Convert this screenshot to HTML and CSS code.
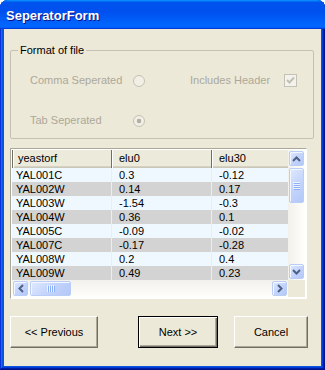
FILE: index.html
```html
<!doctype html>
<html lang="en">
<head>
    <meta charset="UTF-8">
    <title>SeperatorForm</title>
    <link rel="stylesheet" href="styles.css">
</head>
<body>
<div class="window">
    <div class="titlebar">SeperatorForm</div>
    <div class="client">
        <fieldset class="group">
            <legend>Format of file</legend>
            <div class="options">
                <span>Comma Seperated</span>
                <span class="radio"></span>
                <span>Includes Header</span>
                <span class="check">
                    <svg width="11" height="11" viewBox="0 0 11 11"><polyline points="2,5 4.5,7.5 9,2.5" fill="none" stroke="#c2c0b2" stroke-width="2"/></svg>
                </span>
                <span>Tab Seperated</span>
                <span class="radio checked"></span>
            </div>
        </fieldset>

        <div class="grid-box">
            <div class="grid-data">
                <div class="head">
                    <div class="hcell c1">yeastorf</div>
                    <div class="hcell c2">elu0</div>
                    <div class="hcell c3">elu30</div>
                </div>
                <div class="row"><div class="cell c1">YAL001C</div><div class="cell c2">0.3</div><div class="cell c3">-0.12</div></div>
                <div class="row alt"><div class="cell c1">YAL002W</div><div class="cell c2">0.14</div><div class="cell c3">0.17</div></div>
                <div class="row"><div class="cell c1">YAL003W</div><div class="cell c2">-1.54</div><div class="cell c3">-0.3</div></div>
                <div class="row alt"><div class="cell c1">YAL004W</div><div class="cell c2">0.36</div><div class="cell c3">0.1</div></div>
                <div class="row"><div class="cell c1">YAL005C</div><div class="cell c2">-0.09</div><div class="cell c3">-0.02</div></div>
                <div class="row alt"><div class="cell c1">YAL007C</div><div class="cell c2">-0.17</div><div class="cell c3">-0.28</div></div>
                <div class="row"><div class="cell c1">YAL008W</div><div class="cell c2">0.2</div><div class="cell c3">0.4</div></div>
                <div class="row alt"><div class="cell c1">YAL009W</div><div class="cell c2">0.49</div><div class="cell c3">0.23</div></div>
            </div>

            <div class="vscroll">
                <div class="sb-btn"><div class="sb-face">
                    <svg width="9" height="6" viewBox="0 0 9 6"><polyline points="1,5 4.5,1.5 8,5" fill="none" stroke="#4d6185" stroke-width="2"/></svg>
                </div></div>
                <div class="sb-btn thumb-v"><div class="sb-face">
                    <svg width="7" height="8" viewBox="0 0 7 8">
                        <line x1="0" y1="0.5" x2="7" y2="0.5" stroke="#eef4fe"/><line x1="1" y1="1.5" x2="8" y2="1.5" stroke="#8cb0f8"/>
                        <line x1="0" y1="2.5" x2="7" y2="2.5" stroke="#eef4fe"/><line x1="1" y1="3.5" x2="8" y2="3.5" stroke="#8cb0f8"/>
                        <line x1="0" y1="4.5" x2="7" y2="4.5" stroke="#eef4fe"/><line x1="1" y1="5.5" x2="8" y2="5.5" stroke="#8cb0f8"/>
                        <line x1="0" y1="6.5" x2="7" y2="6.5" stroke="#eef4fe"/><line x1="1" y1="7.5" x2="8" y2="7.5" stroke="#8cb0f8"/>
                    </svg>
                </div></div>
                <div class="sb-track"></div>
                <div class="sb-btn"><div class="sb-face">
                    <svg width="9" height="6" viewBox="0 0 9 6"><polyline points="1,1 4.5,4.5 8,1" fill="none" stroke="#4d6185" stroke-width="2"/></svg>
                </div></div>
            </div>

            <div class="hscroll">
                <div class="sb-btn"><div class="sb-face">
                    <svg width="6" height="9" viewBox="0 0 6 9"><polyline points="5,1 1.5,4.5 5,8" fill="none" stroke="#4d6185" stroke-width="2"/></svg>
                </div></div>
                <div class="sb-btn thumb-h"><div class="sb-face">
                    <svg width="8" height="7" viewBox="0 0 8 7">
                        <line x1="0.5" y1="0" x2="0.5" y2="7" stroke="#eef4fe"/><line x1="1.5" y1="1" x2="1.5" y2="8" stroke="#8cb0f8"/>
                        <line x1="2.5" y1="0" x2="2.5" y2="7" stroke="#eef4fe"/><line x1="3.5" y1="1" x2="3.5" y2="8" stroke="#8cb0f8"/>
                        <line x1="4.5" y1="0" x2="4.5" y2="7" stroke="#eef4fe"/><line x1="5.5" y1="1" x2="5.5" y2="8" stroke="#8cb0f8"/>
                        <line x1="6.5" y1="0" x2="6.5" y2="7" stroke="#eef4fe"/><line x1="7.5" y1="1" x2="7.5" y2="8" stroke="#8cb0f8"/>
                    </svg>
                </div></div>
                <div class="sb-track"></div>
                <div class="sb-btn"><div class="sb-face">
                    <svg width="6" height="9" viewBox="0 0 6 9"><polyline points="1,1 4.5,4.5 1,8" fill="none" stroke="#4d6185" stroke-width="2"/></svg>
                </div></div>
            </div>

            <div class="corner"></div>
        </div>

        <div class="buttons">
            <button class="btn btn-prev">&lt;&lt; Previous</button>
            <button class="btn btn-next">Next &gt;&gt;</button>
            <button class="btn btn-cancel">Cancel</button>
        </div>
    </div>
</div>
</body>
</html>
```

FILE: styles.css
```css
* {
    box-sizing: border-box;
}
body {
    margin: 0;
    background: #fff;
    font-family: "Liberation Sans", Arial, sans-serif;
    font-size: 11px;
    color: #000;
}
.window {
    width: 325px;
    height: 370px;
    display: flex;
    flex-direction: column;
    background: #0855dd;
    border-radius: 8px 8px 0 0;
    box-shadow: inset -1px -1px #00138c, inset 1px 1px #0831d9, inset -2px -2px #001ea0,
                inset 2px 2px #166aee, inset -3px -3px #003bda, inset 3px 3px #0855dd;
}
.titlebar {
    flex: none;
    height: 29px;
    padding: 8px 0 0 6px;
    border-radius: 8px 8px 0 0;
    background: linear-gradient(180deg, #0997ff, #0053ee 8%, #0050ee 40%, #06f 88%, #06f 93%, #005bff 95%, #003dd7 96%, #003dd7);
    color: #fff;
    font-weight: bold;
    font-size: 13px;
    line-height: 15px;
    text-shadow: 1px 1px #0f1089;
}
.client {
    flex: 1;
    margin: 0 4px 4px;
    background: #ece9d8;
    display: flex;
    flex-direction: column;
}

/* group box */
.group {
    margin: 15px 7px 0 6px;
    padding: 17px 0 11px 19px;
    border: 1px solid #c4c1b2;
    border-radius: 2px;
    min-width: 0;
}
.group legend {
    margin-left: -12px;
    padding: 0 2px;
    font-size: 11px;
    line-height: 13px;
}
.options {
    display: grid;
    grid-template-columns: 103px 57px 94px 13px;
    grid-template-rows: 13px 13px;
    row-gap: 27px;
    align-items: center;
    color: #aca899;
    line-height: 13px;
}
.radio {
    width: 12px;
    height: 12px;
    border-radius: 50%;
    border: 1px solid #c4c2b4;
    background: #f1efe6;
}
.radio.checked {
    background: radial-gradient(circle, #b2b0a3 0, #b2b0a3 2px, #f1efe6 2.6px);
}
.check {
    width: 13px;
    height: 13px;
    border: 1px solid #c4c2b4;
    background: #f3f2ec;
    display: flex;
    align-items: center;
    justify-content: center;
}

/* data grid */
.grid-box {
    margin: 9px 0 0 6px;
    width: 297px;
    height: 151px;
    padding: 1px;
    border: 1px solid;
    border-color: #aca899 #fff #fff #aca899;
    background: #fff;
    display: grid;
    grid-template-columns: 1fr 17px;
    grid-template-rows: 1fr 17px;
}
.grid-data {
    overflow: hidden;
    background: #fff;
}
.head {
    display: flex;
    height: 18px;
    background: #ebeadb;
    box-shadow: inset 0 -1px #cbc7b8, inset 0 -2px #d6d2c2;
}
.hcell {
    flex: none;
    line-height: 17px;
    padding-left: 7px;
    border-left: 1px solid #716f64;
    box-shadow: inset 1px 0 #fff;
    white-space: nowrap;
}
.hcell.c1 {
    padding-left: 5px;
}
.row {
    display: flex;
    height: 14px;
    background: #f0f8ff;
}
.row.alt {
    background: #d3d3d3;
}
.cell {
    flex: none;
    line-height: 14px;
    padding-left: 7px;
    border-left: 1px solid #efede4;
    white-space: nowrap;
}
.cell.c1 {
    padding-left: 4px;
    border-left: 0;
}
.c1 { width: 99px; }
.c2 { width: 100px; }
.c3 { width: 100px; }

/* scrollbars */
.vscroll {
    display: flex;
    flex-direction: column;
    background: linear-gradient(to right, #f3f1ec, #fefefb);
}
.hscroll {
    display: flex;
    background: linear-gradient(to bottom, #f3f1ec, #fefefb);
}
.sb-btn {
    flex: none;
    width: 17px;
    height: 17px;
    padding: 1px;
}
.sb-face {
    width: 100%;
    height: 100%;
    border-radius: 2px;
    border: 1px solid #b9cdf7;
    background: linear-gradient(135deg, #e0e9fe 0%, #c6d6fc 45%, #b3c8f8 100%);
    box-shadow: inset 1px 1px #f3f7ff;
    display: flex;
    align-items: center;
    justify-content: center;
}
.thumb-v {
    height: 37px;
}
.thumb-h {
    width: 43px;
}
.sb-track {
    flex: 1;
}
.corner {
    background: #ece9d8;
}

/* buttons */
.buttons {
    display: flex;
    margin-top: 17px;
    padding-left: 6px;
}
.btn {
    height: 32px;
    padding: 0;
    font-family: "Liberation Sans", Arial, sans-serif;
    font-size: 11px;
    color: #000;
    background: #ece9d8;
    border: 1px solid;
    border-color: #fff #716f64 #716f64 #fff;
    box-shadow: inset -1px -1px #aca899;
}
.btn-prev {
    width: 88px;
}
.btn-next {
    width: 80px;
    margin-left: 40px;
    border-color: #000;
    box-shadow: inset 1px 1px #fff, inset -1px -1px #716f64, inset -2px -2px #aca899;
}
.btn-cancel {
    width: 74px;
    margin-left: 16px;
}
```
